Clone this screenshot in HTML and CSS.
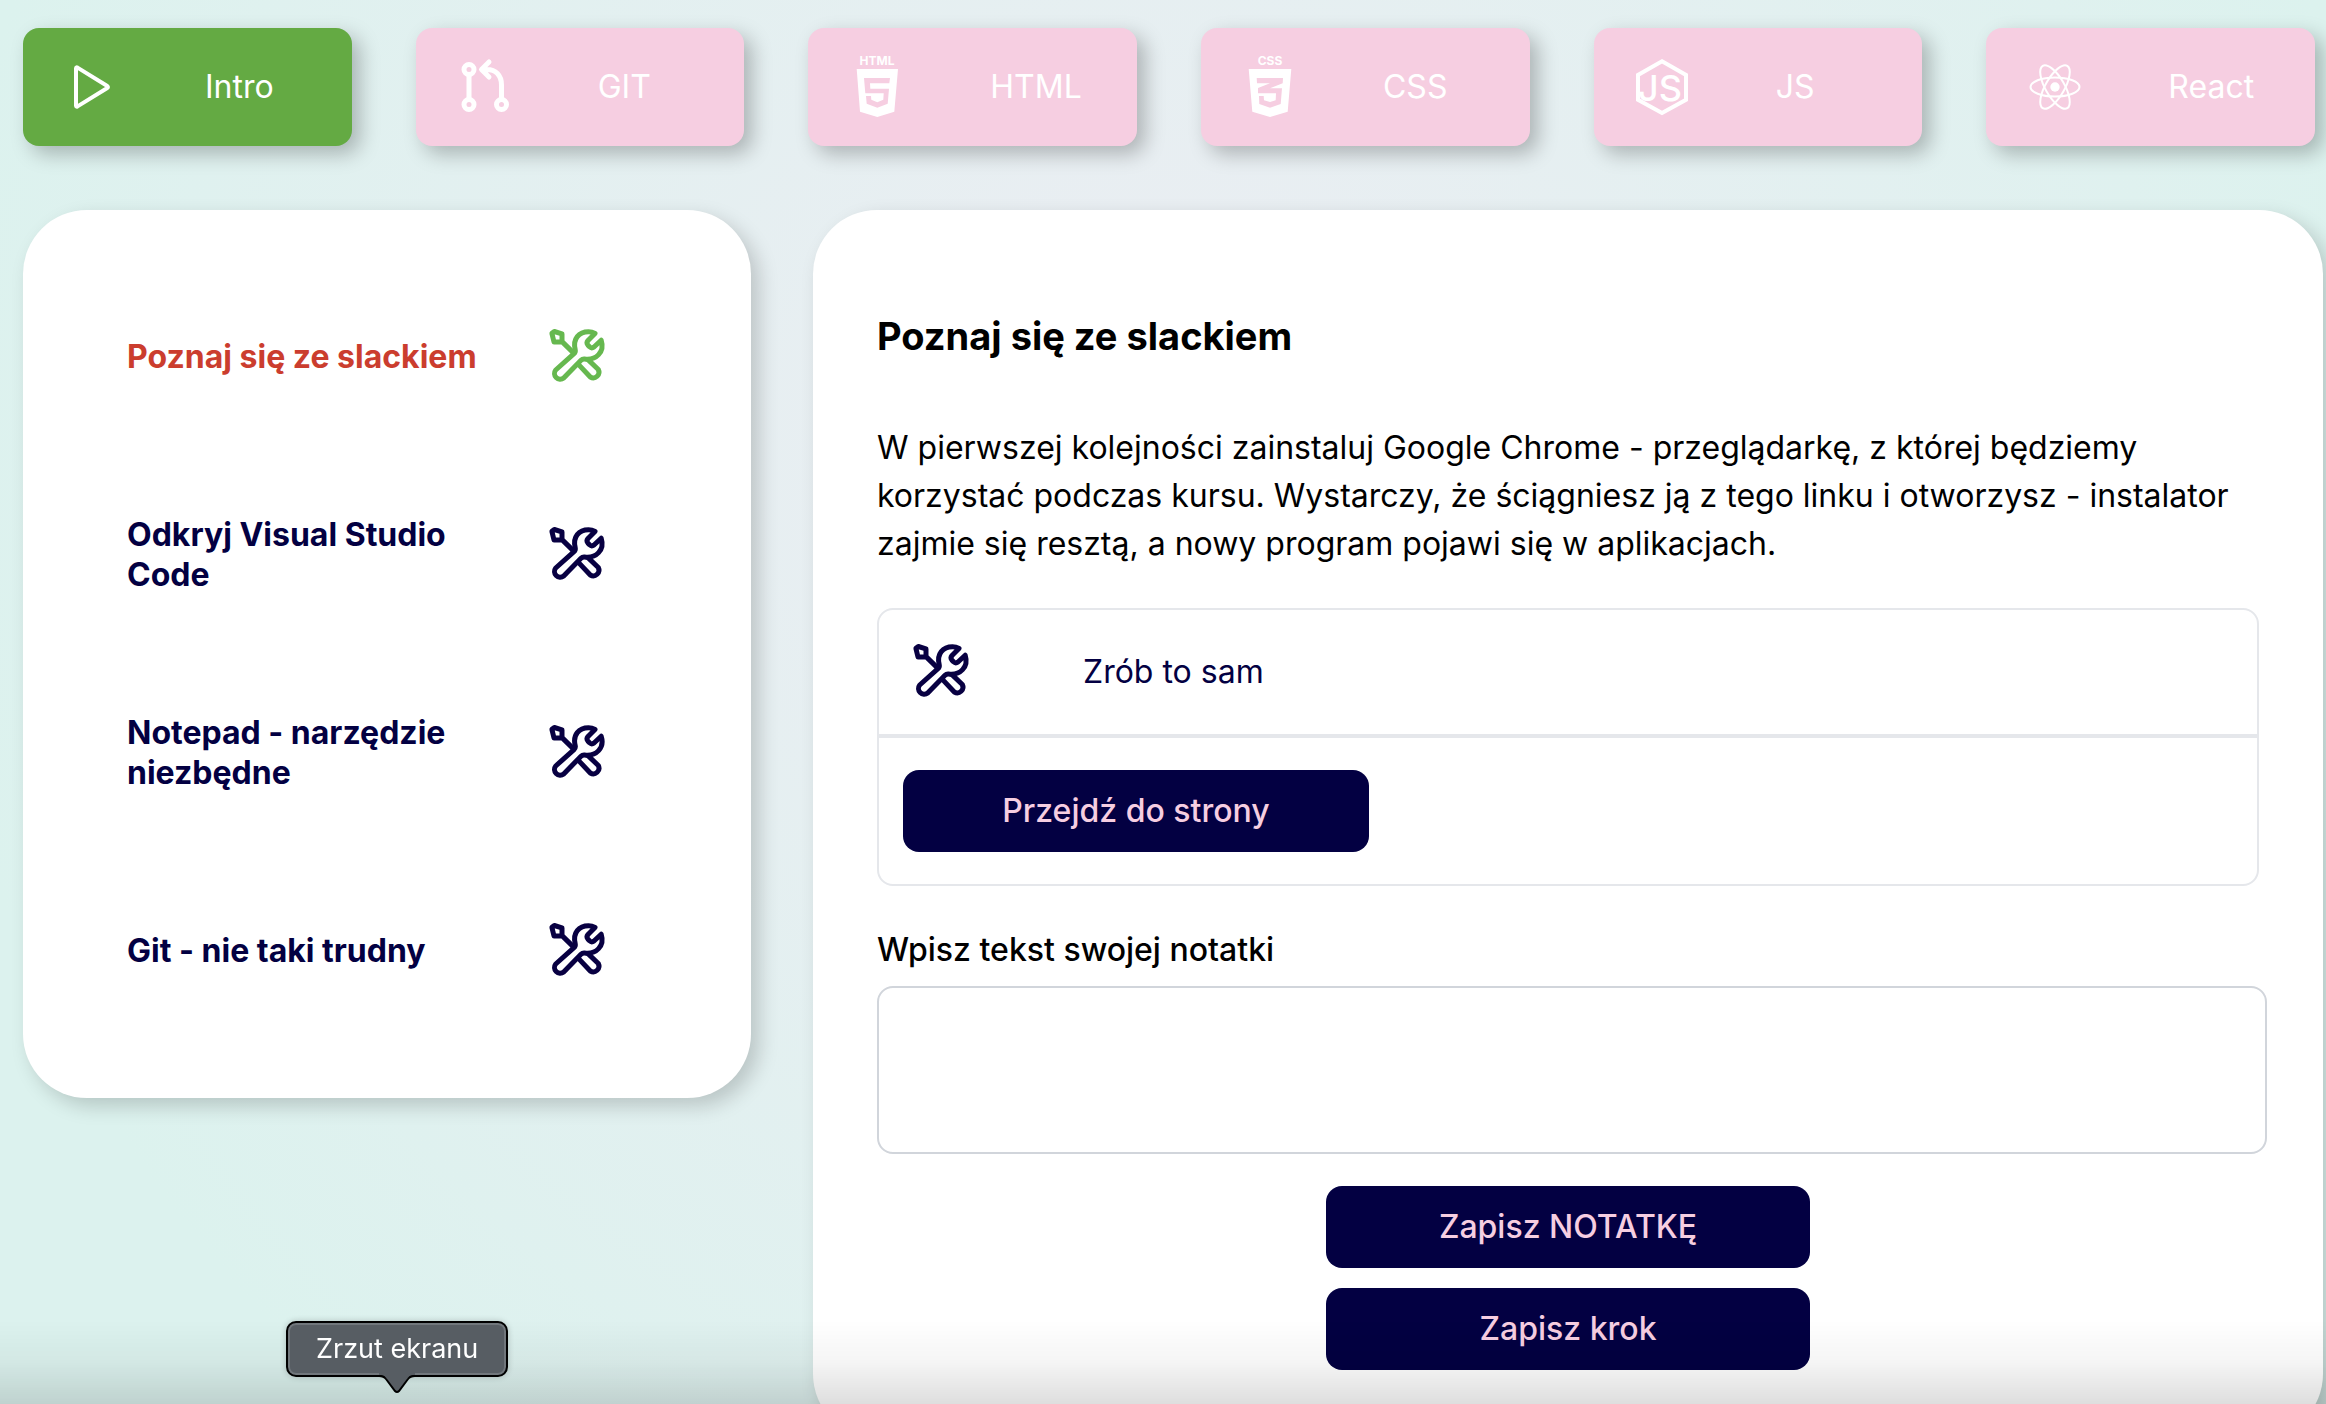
FILE: index.html
```html
<!DOCTYPE html>
<html lang="pl">
<head>
  <meta charset="utf-8">
  <meta name="viewport" content="width=device-width, initial-scale=1">
  <title>Poznaj się ze slackiem</title>
  <link rel="stylesheet" href="styles.css">
</head>
<body>
  <svg class="sprite" aria-hidden="true">
    <symbol id="tools" viewBox="0 0 64 64">
      <g fill="none" stroke="currentColor" stroke-width="5" stroke-linejoin="round" stroke-linecap="round">
        <path d="M10.7 45 L29 28.6 Q30.8 27 30.2 24.5 C27.5 14 34 6.7 43.5 6.7 Q47 6.7 50 8.5 L43 15.5 Q41 17.8 43 20.2 L44.5 21.8 Q46.6 23.8 49 22 L56.2 15.2 C60 27 51 35.6 39.5 34 Q37.4 33.8 36 35.2 L18.7 53 A5.7 5.7 0 0 1 10.7 45 Z"/>
        <path d="M6.9 8.3 L9.3 6.5 L17 8.9 V16.8 L9 17 Z M17.3 16.9 L28 27.4"/>
        <path d="M33.4 39.4 L45.3 52 A5.7 5.7 0 0 0 53.3 44.5 L43 34.6"/>
      </g>
    </symbol>
  </svg>

  <div class="page">
    <nav class="tabs" aria-label="Moduły kursu">
      <button class="tab tab-active" type="button">
        <svg class="tab-icon" viewBox="0 0 58 64" aria-hidden="true">
          <path d="M13 13.4 V50.6 Q13 52.2 14.5 51.4 L44.3 33 Q45.6 32 44.3 31 L14.5 12.6 Q13 11.8 13 13.4 Z" fill="none" stroke="currentColor" stroke-width="4" stroke-linejoin="round"/>
        </svg>
        <span>Intro</span>
      </button>
      <button class="tab" type="button">
        <svg class="tab-icon" viewBox="0 0 58 64" aria-hidden="true">
          <g fill="none" stroke="currentColor" stroke-width="5" stroke-linecap="round" stroke-linejoin="round">
            <circle cx="13" cy="14.5" r="5"/>
            <circle cx="13" cy="49.5" r="5"/>
            <circle cx="45.5" cy="49.5" r="5"/>
            <path d="M13 20 V44 M45.5 44 V30 C45.5 20 39.5 14.5 31 14.5 H26 M33 7 L25.5 14.5 L33 22"/>
          </g>
        </svg>
        <span>GIT</span>
      </button>
      <button class="tab" type="button">
        <svg class="tab-icon" viewBox="0 0 58 64" aria-hidden="true">
          <text class="logo-caption" x="29" y="10" text-anchor="middle">HTML</text>
          <path fill="currentColor" fill-rule="evenodd" d="M8.7 14 H50 L46.3 56.7 L29.3 62 L12 56.7 Z M16 23 L17.3 38.3 H35.7 L35.3 44.7 L29.3 47.3 L23.3 44.7 L23 41 H18 L18.7 48.7 L29.3 52.7 L39.7 48.7 L41 33.7 H22.3 L22 28.3 H41.3 L42 23 Z"/>
        </svg>
        <span>HTML</span>
      </button>
      <button class="tab" type="button">
        <svg class="tab-icon" viewBox="0 0 58 64" aria-hidden="true">
          <text class="logo-caption" x="29" y="10" text-anchor="middle">CSS</text>
          <path fill="currentColor" fill-rule="evenodd" d="M7.7 14 H50.3 L46.7 56.7 L29 62 L11.3 56.7 Z M15.7 23 L16 28.3 H29 L17 33 V38.3 H35 L34.7 45.3 L29 47 L23 45.3 L22.7 41 H18 L18.3 49 L29 52.7 L39.7 49 L41 33.3 H29 L41.7 28.3 L42 23 Z"/>
        </svg>
        <span>CSS</span>
      </button>
      <button class="tab" type="button">
        <svg class="tab-icon" viewBox="0 0 58 64" aria-hidden="true">
          <path d="M28 6.3 L52 20 V44.7 L28 58 L4 44.7 V20 Z" fill="none" stroke="currentColor" stroke-width="4"/>
          <text class="logo-letters" x="48" y="46" text-anchor="end">JS</text>
        </svg>
        <span>JS</span>
      </button>
      <button class="tab" type="button">
        <svg class="tab-icon" viewBox="0 0 58 64" aria-hidden="true">
          <g fill="none" stroke="currentColor" stroke-width="2">
            <ellipse cx="29" cy="32" rx="24.5" ry="9.5"/>
            <ellipse cx="29" cy="32" rx="24.5" ry="9.5" transform="rotate(60 29 32)"/>
            <ellipse cx="29" cy="32" rx="24.5" ry="9.5" transform="rotate(120 29 32)"/>
          </g>
          <circle cx="29" cy="32" r="4.7" fill="currentColor"/>
        </svg>
        <span>React</span>
      </button>
    </nav>

    <main class="layout">
      <aside class="card steps-card">
        <ul class="steps">
          <li><a class="step step-current" href="#slack"><span class="step-name">Poznaj się ze slackiem</span><svg class="tool-icon" aria-hidden="true"><use href="#tools"/></svg></a></li>
          <li><a class="step" href="#vsc"><span class="step-name">Odkryj Visual Studio Code</span><svg class="tool-icon" aria-hidden="true"><use href="#tools"/></svg></a></li>
          <li><a class="step" href="#notepad"><span class="step-name">Notepad - narzędzie niezbędne</span><svg class="tool-icon" aria-hidden="true"><use href="#tools"/></svg></a></li>
          <li><a class="step" href="#git"><span class="step-name">Git - nie taki trudny</span><svg class="tool-icon" aria-hidden="true"><use href="#tools"/></svg></a></li>
        </ul>
      </aside>

      <article class="card lesson" id="slack">
        <h1 class="lesson-title">Poznaj się ze slackiem</h1>
        <p class="lesson-text">W pierwszej kolejności zainstaluj Google Chrome - przeglądarkę, z której będziemy korzystać podczas kursu. Wystarczy, że ściągniesz ją z tego linku i otworzysz - instalator zajmie się resztą, a nowy program pojawi się w aplikacjach.</p>

        <section class="task">
          <div class="task-head">
            <svg class="tool-icon" aria-hidden="true"><use href="#tools"/></svg>
            <span>Zrób to sam</span>
          </div>
          <div class="task-body">
            <a class="btn btn-link" href="#strona">Przejdź do strony</a>
          </div>
        </section>

        <form class="note-form">
          <label class="note-label" for="note">Wpisz tekst swojej notatki</label>
          <textarea class="note-input" id="note" name="note"></textarea>
          <div class="note-actions">
            <button class="btn" type="button">Zapisz NOTATKĘ</button>
            <button class="btn" type="button">Zapisz krok</button>
          </div>
        </form>
      </article>
    </main>
  </div>

  <div class="bottom-shade"></div>
  <div class="tooltip" role="tooltip">
    Zrzut ekranu
    <svg class="tooltip-arrow" viewBox="0 0 36 20" aria-hidden="true">
      <path class="arrow-fill" d="M0 0 H36 V2 Q31 2 29 5 L20 18 Q18 20 16 18 L7 5 Q5 2 0 2 Z"/>
      <path class="arrow-line" d="M0 3 Q5 3 7 6 L16 18 Q18 20 20 18 L29 6 Q31 3 36 3"/>
    </svg>
  </div>
</body>
</html>
```

FILE: styles.css
```css
:root {
  --navy: #030042;
  --pink: #f6cee1;
  --green: #64aa43;
  --line: #e5e7eb;
}

* {
  box-sizing: border-box;
}

body {
  margin: 0;
  font-family: Inter, "Liberation Sans", sans-serif;
  font-size: 32px;
  line-height: 48px;
  color: #000;
}

button,
textarea {
  font: inherit;
}

.sprite {
  position: absolute;
  width: 0;
  height: 0;
}

.page {
  height: 100vh;
  overflow: auto;
  scrollbar-width: none;
  padding: 28px 3px 28px 23px;
  background: radial-gradient(circle at 50% 33%, #ecedf3 0, #dcf2ee 1240px);
}

.tabs {
  display: grid;
  grid-template-columns: repeat(6, 1fr);
  gap: 64px;
  margin-right: 8px;
  margin-bottom: 64px;
}

.tab {
  display: flex;
  align-items: center;
  gap: 84px;
  height: 118px;
  padding: 0 0 0 40px;
  border: 0;
  border-radius: 16px;
  background: var(--pink);
  color: #fff;
  box-shadow: 8px 8px 20px rgba(0, 0, 0, 0.25);
}

.tab-active {
  background: var(--green);
}

.tab-icon {
  flex: none;
  width: 58px;
  height: 64px;
  overflow: visible;
}

.logo-caption {
  font-size: 12px;
  font-weight: 700;
  fill: currentColor;
}

.logo-letters {
  font-size: 36px;
  font-weight: 500;
  fill: currentColor;
}

.layout {
  display: grid;
  grid-template-columns: 728fr 1510fr;
  gap: 62px;
  align-items: start;
}

.card {
  border-radius: 64px;
  background: #fff;
  box-shadow: 8px 8px 20px rgba(0, 0, 0, 0.18);
}

.steps-card {
  padding: 48px 142px 48px 104px;
}

.steps {
  margin: 0;
  padding: 0;
  list-style: none;
}

.step {
  display: flex;
  align-items: center;
  gap: 48px;
  height: 198px;
  color: var(--navy);
  font-weight: 700;
  line-height: 40px;
  text-decoration: none;
}

.step-name {
  flex: 1;
}

.step-current .step-name {
  color: #cb3d2e;
}

.step-current .tool-icon {
  color: #66b84f;
}

.tool-icon {
  flex: none;
  width: 64px;
  height: 64px;
  color: #080042;
}

.lesson {
  padding: 102px 64px 68px;
}

.lesson-title {
  margin: 0 0 64px;
  font-size: 38px;
  font-weight: 700;
  line-height: 48px;
}

.lesson-text {
  margin: 0 0 40px;
}

.task {
  margin-bottom: 40px;
  border: 2px solid var(--line);
  border-radius: 16px;
}

.task-head {
  display: flex;
  align-items: center;
  gap: 110px;
  padding: 30px;
  border-bottom: 4px solid var(--line);
  color: var(--navy);
}

.task-body {
  display: flex;
  padding: 32px 24px;
}

.btn {
  width: 484px;
  padding: 17px 24px;
  border: 0;
  border-radius: 16px;
  background: var(--navy);
  color: var(--pink);
  font-weight: 500;
  text-align: center;
  text-decoration: none;
}

.btn-link {
  width: 466px;
}

.note-form {
  display: flex;
  flex-direction: column;
}

.note-label {
  margin-bottom: 12px;
  font-weight: 500;
}

.note-input {
  height: 168px;
  margin-right: -8px;
  padding: 16px 24px;
  border: 2px solid #d1d5db;
  border-radius: 16px;
  background: #fff;
  resize: none;
}

.note-actions {
  display: flex;
  flex-direction: column;
  align-items: center;
  gap: 20px;
  margin-top: 32px;
}

.bottom-shade {
  position: fixed;
  inset: auto 0 0;
  height: 84px;
  background: linear-gradient(rgba(0, 0, 0, 0), rgba(0, 0, 0, 0.04) 50%, rgba(0, 0, 0, 0.13));
  pointer-events: none;
}

.tooltip {
  position: fixed;
  left: 286px;
  bottom: 27px;
  padding: 10px 28px;
  border: 2px solid #000;
  border-radius: 10px;
  background: #575d63;
  box-shadow: inset 0 0 0 2px #71777c, 0 0 6px rgba(0, 0, 0, 0.2);
  color: #fff;
  font-size: 27px;
  line-height: 32px;
}

.tooltip-arrow {
  position: absolute;
  top: calc(100% - 2px);
  left: calc(50% - 18px);
  width: 36px;
  height: 20px;
  overflow: visible;
}

.arrow-fill {
  fill: #575d63;
}

.arrow-line {
  fill: none;
  stroke: #000;
  stroke-width: 2;
}
```
